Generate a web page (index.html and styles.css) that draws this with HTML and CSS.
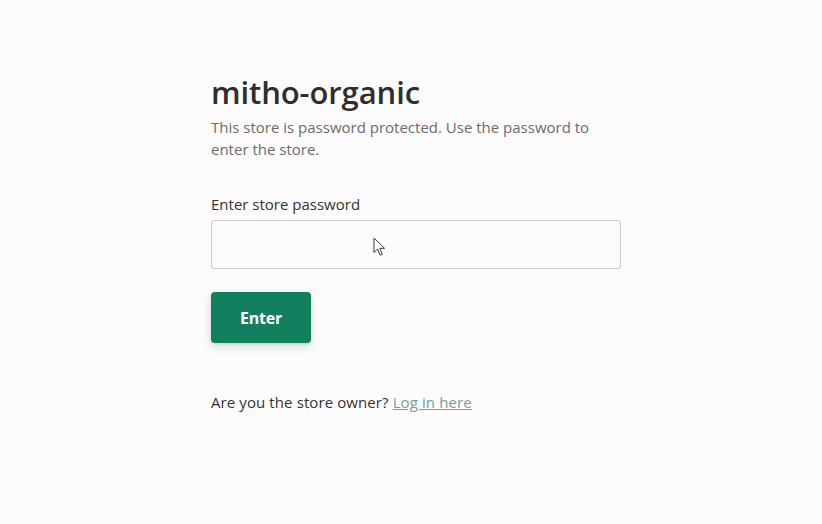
FILE: index.html
```html
<!DOCTYPE html>
<html lang="en">
<head>
<meta charset="utf-8">
<title>mitho-organic</title>
<link rel="stylesheet" href="styles.css">
</head>
<body>
<main class="page">
  <section class="content">
    <h1 class="title">mitho-organic</h1>
    <p class="intro">This store is password protected. Use the password to enter the store.</p>
    <form class="form">
      <label class="label" for="pw">Enter store password</label>
      <div class="field">
        <input class="input" id="pw" type="password">
        <svg class="cursor" width="14" height="20" viewBox="0 0 14 20"><path d="M1 1 L1 15.5 L4.6 12 L7.2 18.2 L9.3 17.3 L6.8 11.3 L11.6 11.3 Z" fill="#fff" stroke="#3a3a3a" stroke-width="1" stroke-linejoin="round"/></svg>
      </div>
      <button class="button" type="button">Enter</button>
    </form>
    <p class="owner">Are you the store owner? <a class="link" href="#">Log in here</a></p>
  </section>
</main>
</body>
</html>
```
FILE: styles.css
```css
html, body {
  margin: 0;
  padding: 0;
  background: #fdfbfb;
}
body {
  font-family: "Open Sans", "Noto Sans", sans-serif;
  color: #333;
}
.page {
  padding: 72px 0 0 211px;
}
.content {
  width: 410px;
}
.title {
  margin: 0;
  font-size: 31px;
  line-height: 40px;
  font-weight: 600;
  color: #2e2e2e;
  letter-spacing: -0.1px;
}
.intro {
  margin: 4px 0 0;
  width: 390px;
  font-size: 15px;
  line-height: 22px;
  color: #6b6b6b;
}
.form {
  margin-top: 33px;
  display: flex;
  flex-direction: column;
  align-items: flex-start;
}
.label {
  font-size: 15px;
  line-height: 22px;
  color: #333;
  margin-bottom: 5px;
}
.field {
  position: relative;
  width: 410px;
}
.input {
  display: block;
  box-sizing: border-box;
  width: 410px;
  height: 49px;
  border: 1px solid #c9c9c9;
  border-radius: 3px;
  background: #fdfcfc;
  margin: 0;
}
.cursor {
  position: absolute;
  left: 162px;
  top: 17px;
}
.button {
  margin-top: 23px;
  width: 100px;
  height: 51px;
  border: 0;
  border-radius: 4px;
  background: #12805e;
  color: #fff;
  font-family: "Open Sans", sans-serif;
  font-weight: 700;
  font-size: 16px;
  letter-spacing: -0.2px;
  box-shadow: 0 4px 10px rgba(18, 128, 94, 0.18), 0 1px 3px rgba(0,0,0,0.12);
}
.owner {
  margin: 48px 0 0;
  font-size: 15px;
  line-height: 22px;
  color: #333;
  letter-spacing: 0.1px;
}
.link {
  color: #74a095;
  text-decoration: underline;
}
```
